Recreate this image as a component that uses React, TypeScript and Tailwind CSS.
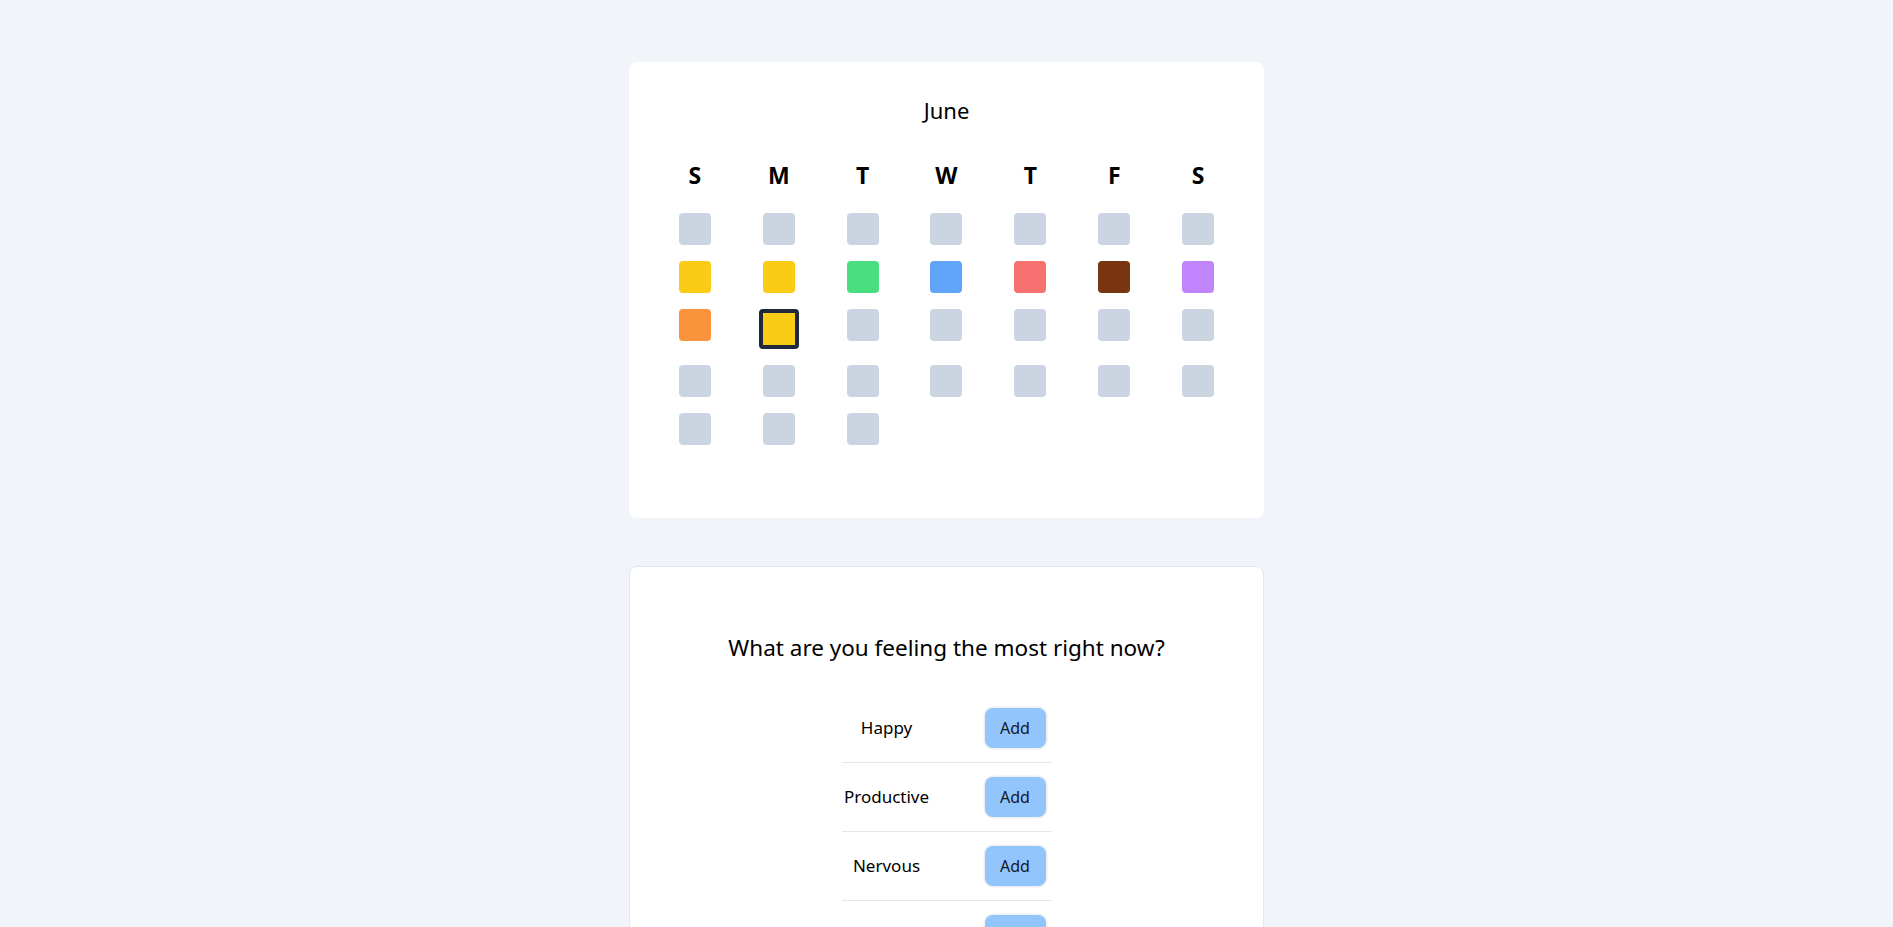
import React from "react";

const gray = "bg-[#cbd5e1]";
type Cell = { c: string; sel?: boolean } | null;

const rows: Cell[][] = [
  Array(7).fill({ c: gray }),
  [
    { c: "bg-[#facc15]" },
    { c: "bg-[#facc15]" },
    { c: "bg-[#4ade80]" },
    { c: "bg-[#60a5fa]" },
    { c: "bg-[#f87171]" },
    { c: "bg-[#78350f]" },
    { c: "bg-[#c084fc]" },
  ],
  [
    { c: "bg-[#fb923c]" },
    { c: "bg-[#facc15]", sel: true },
    { c: gray },
    { c: gray },
    { c: gray },
    { c: gray },
    { c: gray },
  ],
  Array(7).fill({ c: gray }),
  [{ c: gray }, { c: gray }, { c: gray }, null, null, null, null],
];

const days = ["S", "M", "T", "W", "T", "F", "S"];
const feelings = ["Happy", "Productive", "Nervous", "Sad", "Angry", "Tired", "Calm", "Excited"];

export default function App() {
  return (
    <div
      className="min-h-screen bg-[#f1f5f9] flex flex-col items-center pt-[62px] pb-16 text-black"
      style={{ fontFamily: '"Noto Sans", "Open Sans", sans-serif' }}
    >
      <div className="w-[635px] bg-white rounded-lg px-6 pt-[34px] pb-[73px]">
        <h2 className="text-[22px] leading-7 text-center">June</h2>
        <div className="grid grid-cols-7 mt-[35px]">
          {days.map((d, i) => (
            <div key={i} className="text-[23px] leading-8 font-bold text-center">
              {d}
            </div>
          ))}
        </div>
        <div className="grid grid-cols-7 gap-y-4 mt-[22px] items-start">
          {rows.flat().map((cell, i) => (
            <div key={i} className="flex justify-center">
              {cell ? (
                cell.sel ? (
                  <div className={`w-10 h-10 border-4 border-[#1e293b] rounded-sm ${cell.c}`} />
                ) : (
                  <div className={`w-8 h-8 rounded-sm ${cell.c}`} />
                )
              ) : null}
            </div>
          ))}
        </div>
      </div>

      <div className="w-[635px] bg-white rounded-lg border border-[#e2e8f0] mt-[48px] pt-[65px] pb-10 flex flex-col items-center">
        <h2 className="text-[22.5px] leading-8">What are you feeling the most right now?</h2>
        <div className="w-[210px] mt-[30px]">
          {feelings.map((f) => (
            <div key={f} className="flex items-center py-3.5 border-b border-[#e2e8f0]">
              <div className="w-[90px] text-center text-[17px]">{f}</div>
              <button className="ml-[53px] w-[61px] h-10 rounded-lg bg-[#93c5fd] ring-[1.5px] ring-[#eceff3] text-base text-[#111827]">
                Add
              </button>
            </div>
          ))}
        </div>
      </div>
    </div>
  );
}
